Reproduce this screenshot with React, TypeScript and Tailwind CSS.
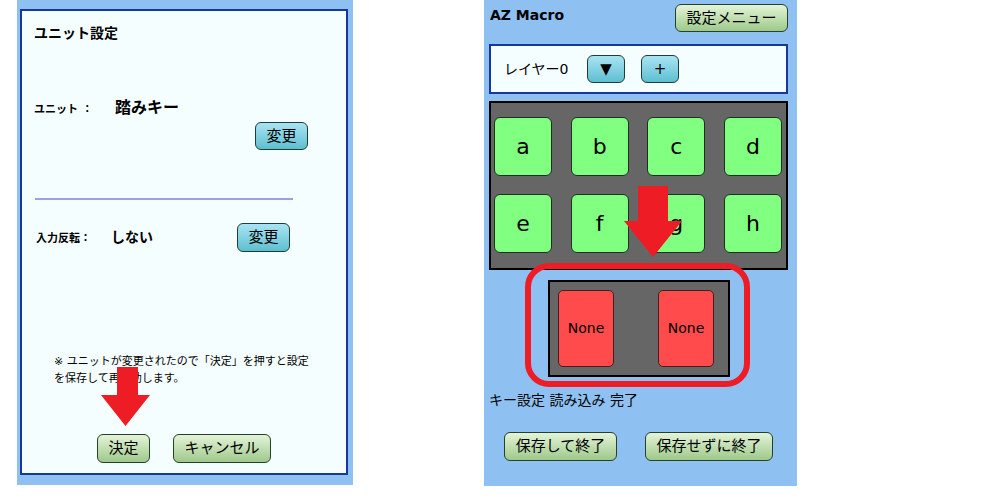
import React from 'react';

const font = "font-['DejaVu_Sans','Noto_Sans_CJK_JP',sans-serif]";

const tealBtn =
  'rounded-[6px] border border-[#1f3d35] bg-gradient-to-b from-[#a8e4f4] to-[#5cbfd0] text-[15px] text-black flex items-center justify-center';
const greenBtn =
  'rounded-[6px] border border-[#26402a] bg-gradient-to-b from-[#e4f4d8] to-[#9ec98a] text-[15px] text-black flex items-center justify-center';

const DownArrow: React.FC<{ className: string; w: number; h: number; shaftL: number; shaftR: number; headY: number }> = ({
  className,
  w,
  h,
  shaftL,
  shaftR,
  headY,
}) => (
  <svg className={className} width={w} height={h} viewBox={`0 0 ${w} ${h}`}>
    <polygon
      points={`${shaftL},0 ${shaftR},0 ${shaftR},${headY} ${w},${headY} ${w / 2},${h} 0,${headY} ${shaftL},${headY}`}
      fill="#ee1c24"
    />
  </svg>
);

const UnitSettings: React.FC = () => (
  <div className="relative ml-[17px] w-[336px] h-[485px] bg-[#8fc0f2] pt-[9px] pl-[3px]">
    <div className="w-[328px] h-[466px] border-2 border-[#17379a] bg-[#f5feff] pl-[12px]">
      <div className="mt-[12px] h-[20px] leading-[20px] text-[14px] font-bold">ユニット設定</div>

      <div className="mt-[54px] h-[24px] flex items-center">
        <span className="w-[81px] text-[11px] font-bold pt-[3px]">ユニット ：</span>
        <span className="text-[16px] font-bold -mt-[2px]">踏みキー</span>
      </div>
      <div className="mt-[1px] flex justify-end pr-[38px]">
        <button className={`${tealBtn} w-[53px] h-[28px]`}>変更</button>
      </div>

      <div className="mt-[48px] ml-[1px] w-[258px] h-[2px] bg-[#9ca0e2]" />

      <div className="mt-[23px] h-[29px] flex items-center">
        <span className="w-[77px] pl-[2px] text-[11px] font-bold pt-[3px]">入力反転：</span>
        <span className="w-[126px] text-[14px] font-bold">しない</span>
        <button className={`${tealBtn} w-[53px] h-[29px]`}>変更</button>
      </div>

      <p className="mt-[101px] ml-[20px] text-[11px] leading-[17px]">
        ※ ユニットが変更されたので「決定」を押すと設定
        <br />
        を保存して再起動します。
      </p>

      <div className="mt-[47px] ml-[63px] flex gap-[23px]">
        <button className={`${greenBtn} w-[53px] h-[29px]`}>決定</button>
        <button className={`${greenBtn} w-[98px] h-[29px]`}>キャンセル</button>
      </div>
    </div>

    <DownArrow className="absolute left-[84px] top-[367px]" w={49} h={59} shaftL={16} shaftR={37} headY={28} />
  </div>
);

const keys = [
  ['a', 'b', 'c', 'd'],
  ['e', 'f', 'g', 'h'],
];

const Macro: React.FC = () => (
  <div className="relative w-[313px] h-[486px] bg-[#8fc0f2] pl-[5px]">
    <div className="flex justify-between items-start pt-[4px] pr-[9px]">
      <span className="mt-[1px] ml-[1px] text-[14px] font-bold font-['DejaVu_Sans',sans-serif]">AZ Macro</span>
      <button className={`${greenBtn} w-[113px] h-[28px]`}>設定メニュー</button>
    </div>

    <div className="mt-[12px] w-[299px] h-[50px] border-2 border-[#17379a] bg-[#f5feff] flex items-center pl-[13px]">
      <span className="w-[83px] text-[14px]">レイヤー0</span>
      <button className={`${tealBtn} w-[38px] h-[28px] text-[13px]`}>▼</button>
      <button className={`${tealBtn} w-[38px] h-[28px] ml-[16px] text-[14px]`}>+</button>
    </div>

    <div className="mt-[7px] w-[299px] h-[169px] border-2 border-black bg-[#666666] pt-[14px] px-[3px] pr-[4px] flex flex-col gap-[18px]">
      {keys.map((row, i) => (
        <div key={i} className="flex justify-between">
          {row.map((k) => (
            <div
              key={k}
              className="w-[58px] h-[59px] rounded-[6px] border border-[#203020] bg-[#80ff80] flex items-center justify-center text-[22px] font-['DejaVu_Sans',sans-serif]"
            >
              {k}
            </div>
          ))}
        </div>
      ))}
    </div>

    <div className="mt-[10px] ml-[59px] w-[182px] h-[97px] border-2 border-black bg-[#666666] pt-[8px] pl-[8px] flex gap-[44px]">
      {[0, 1].map((i) => (
        <div
          key={i}
          className="w-[56px] h-[77px] rounded-[5px] border border-[#402020] bg-[#ff4b4b] flex items-center justify-center text-[14px] font-['DejaVu_Sans',sans-serif]"
        >
          None
        </div>
      ))}
    </div>

    <div className="mt-[13px] h-[20px] leading-[20px] text-[14px]">キー設定 読み込み 完了</div>

    <div className="mt-[22px] ml-[15px] flex gap-[28px]">
      <button className={`${greenBtn} w-[113px] h-[29px]`}>保存して終了</button>
      <button className={`${greenBtn} w-[128px] h-[29px]`}>保存せずに終了</button>
    </div>

    {/* annotations */}
    <div className="absolute left-[41px] top-[263px] w-[225px] h-[124px] rounded-[24px] border-[6px] border-[#ee1c24]" />
    <DownArrow className="absolute left-[140px] top-[186px]" w={58} h={71} shaftL={14} shaftR={44} headY={35} />
  </div>
);

export default function App() {
  return (
    <div className={`w-[1000px] h-[500px] bg-white flex items-start gap-[131px] text-black ${font}`}>
      <UnitSettings />
      <Macro />
    </div>
  );
}
